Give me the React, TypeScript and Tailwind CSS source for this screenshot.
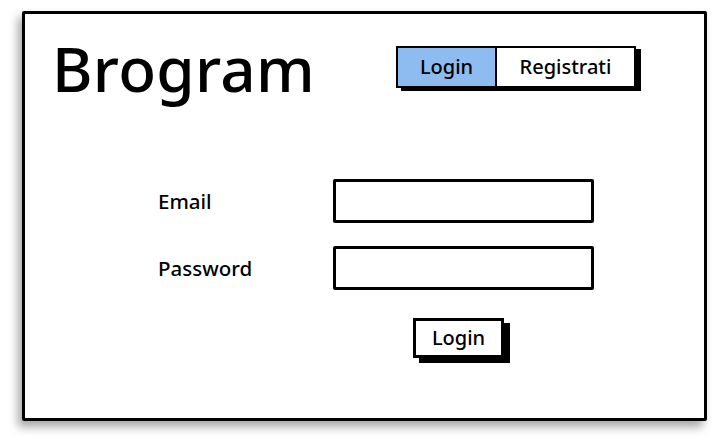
import React from "react";

export default function App() {
  const font = { fontFamily: '"Noto Sans", "Open Sans", sans-serif' };
  return (
    <div className="w-[717px] h-[445px] bg-white overflow-hidden" style={font}>
      <div className="ml-[22px] mt-[11px] w-[685px] h-[410px] border-[3px] border-black bg-white rounded-[2px] shadow-[-4px_6px_10px_rgba(0,0,0,0.35)] flex flex-col">
        <div className="flex items-start">
          <div className="ml-[27px] mt-[15px] text-[62px] leading-[78px] text-black font-medium tracking-[0.3px]">
            Brogram
          </div>
          <div className="ml-auto mr-[68px] mt-[32px] flex border-2 border-black shadow-[5px_3px_0_#000] h-[42px]">
            <div className="w-[99px] bg-[#8fbcf0] border-r-2 border-black flex items-center justify-center text-[20px] font-medium text-black">
              Login
            </div>
            <div className="w-[137px] bg-white flex items-center justify-center text-[20px] font-medium text-black">
              Registrati
            </div>
          </div>
        </div>
        <div className="ml-[133px] mt-[72px] flex flex-col">
          <div className="flex items-center h-[44px]">
            <div className="w-[175px] text-[20.5px] font-medium text-black">Email</div>
            <div className="w-[261px] h-[44px] border-[3px] border-black rounded-[2px]" />
          </div>
          <div className="flex items-center h-[44px] mt-[23px]">
            <div className="w-[175px] text-[20.5px] font-medium text-black">Password</div>
            <div className="w-[261px] h-[44px] border-[3px] border-black rounded-[2px]" />
          </div>
          <div className="ml-[255px] mt-[28px] w-[91px] h-[40px] border-[3px] border-black shadow-[6px_5px_0_#000] flex items-center justify-center text-[20px] font-medium text-black">
            Login
          </div>
        </div>
      </div>
    </div>
  );
}
